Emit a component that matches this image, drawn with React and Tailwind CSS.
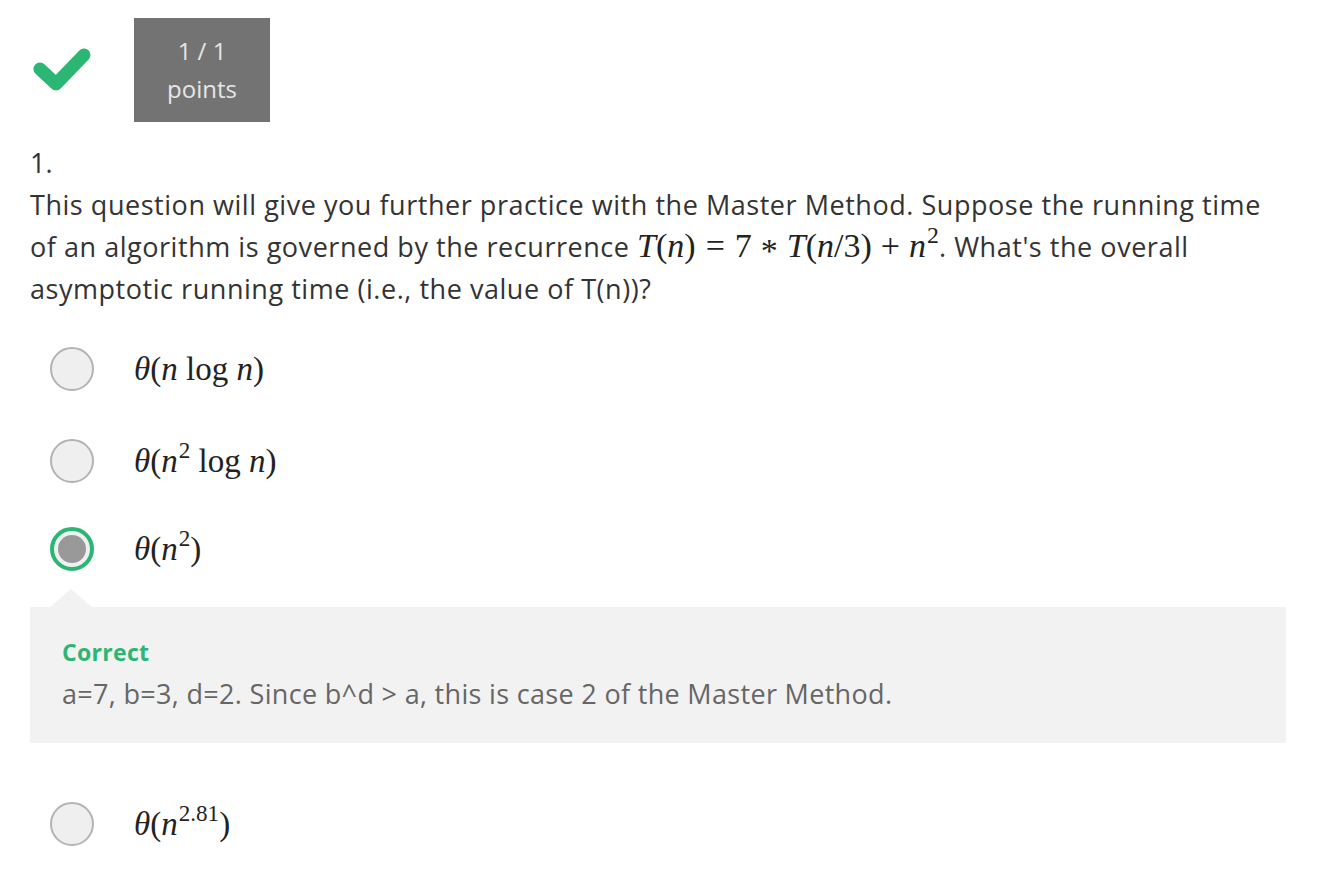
import { useState } from 'react';

const Sup = ({ children }) => (
  <sup className="text-[70%] -top-[0.6em] ml-[1px]">{children}</sup>
);

const options = [
  { id: 1, label: (<><i>θ</i>(<i>n</i> log <i>n</i>)</>) },
  { id: 2, label: (<><i>θ</i>(<i>n</i><Sup>2</Sup> log <i>n</i>)</>) },
  { id: 3, label: (<><i>θ</i>(<i>n</i><Sup>2</Sup>)</>) },
  { id: 4, label: (<><i>θ</i>(<i>n</i><Sup>2.81</Sup>)</>) },
];

const Radio = ({ checked }) =>
  checked ? (
    <div className="w-[44px] h-[44px] rounded-full border-[4px] border-[#2bb673] bg-[#f0f0f0] flex items-center justify-center">
      <div className="w-[28px] h-[28px] rounded-full bg-[#999999]" />
    </div>
  ) : (
    <div className="w-[44px] h-[44px] rounded-full border-2 border-[#b3b3b3] bg-[#efefef]" />
  );

const Option = ({ option, checked, className }) => (
  <div className={`flex items-center h-[44px] pl-[20px] ${className}`}>
    <Radio checked={checked} />
    <span className="ml-[40px] text-[33px] text-[#222] font-['Liberation_Serif',serif] leading-none">
      {option.label}
    </span>
  </div>
);

const App = () => {
  const [selected] = useState(3);

  return (
    <div className="w-[1324px] h-[878px] bg-white pl-[30px] pr-[38px] pt-[18px] font-['Open_Sans',sans-serif] text-[#333]">
      {/* 헤더: 체크 + 점수 */}
      <div className="flex items-center">
        <svg width="60" height="50" viewBox="0 0 60 50" className="ml-[2px]">
          <polyline
            points="8,24 24,39 52,10"
            fill="none"
            stroke="#2bb673"
            strokeWidth="13"
            strokeLinecap="round"
            strokeLinejoin="round"
          />
        </svg>
        <div className="ml-[42px] w-[136px] h-[104px] bg-[#737373] flex flex-col items-center justify-center text-[24px] leading-[38px] text-[#e6e6e6]">
          <div>1 / 1</div>
          <div>points</div>
        </div>
      </div>

      {/* 문제 */}
      <div className="mt-[20px] text-[27px] leading-[42px]">1.</div>
      <p className="text-[27px] leading-[42px] tracking-[0.02em]">
        This question will give you further practice with the Master Method. Suppose the running time of an algorithm is
        governed by the recurrence{' '}
        <span className="font-['Liberation_Serif',serif] text-[34px] leading-[20px] text-[#222] tracking-normal">
          <i>T</i>(<i>n</i>)<span className="mx-[10px]">=</span>7<span className="mx-[9px] relative top-[5px]">*</span>
          <i>T</i>(<i>n</i>/3)<span className="mx-[9px]">+</span>
          <i>n</i>
          <Sup>2</Sup>
        </span>
        . What's the overall asymptotic running time (i.e., the value of T(n))?
      </p>

      {/* 선택지 */}
      <Option option={options[0]} checked={selected === 1} className="mt-[37px]" />
      <Option option={options[1]} checked={selected === 2} className="mt-[48px]" />
      <Option option={options[2]} checked={selected === 3} className="mt-[44px]" />

      {/* 피드백 */}
      <div className="relative mt-[36px] bg-[#f2f2f2] h-[136px] pl-[32px] pt-[30px] tracking-[0.02em]">
        <div className="absolute left-[20px] -top-[18px] w-0 h-0 border-l-[21px] border-r-[21px] border-b-[18px] border-l-transparent border-r-transparent border-b-[#f2f2f2]" />
        <div className="text-[23px] font-bold text-[#2bb673] leading-[30px]">Correct</div>
        <div className="mt-[6px] text-[27px] leading-[42px] text-[#666]">
          a=7, b=3, d=2. Since b^d &gt; a, this is case 2 of the Master Method.
        </div>
      </div>

      <Option option={options[3]} checked={selected === 4} className="mt-[59px]" />
    </div>
  );
};

export default App;
